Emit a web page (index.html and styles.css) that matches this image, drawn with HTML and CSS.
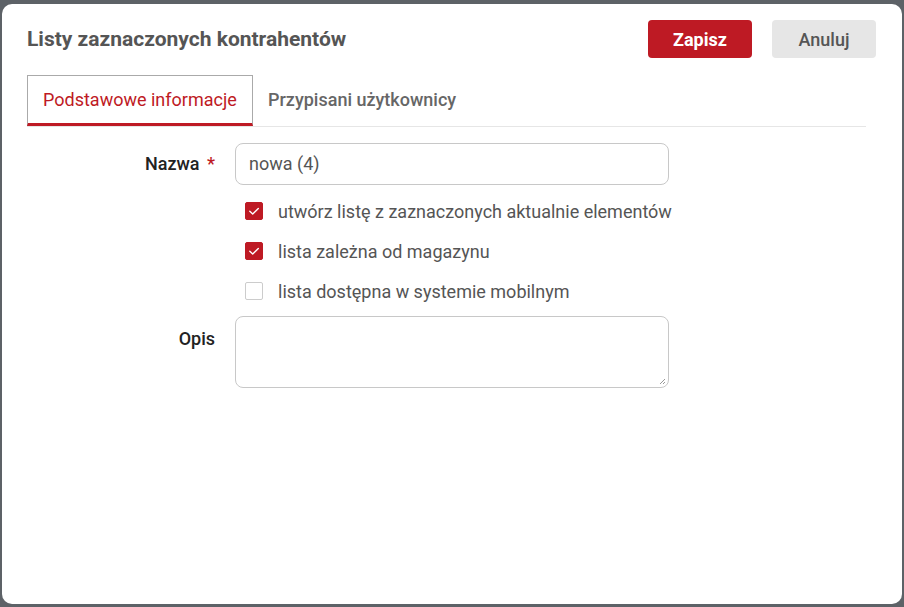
FILE: index.html
```html
<!DOCTYPE html>
<html lang="pl">
<head>
<meta charset="utf-8">
<title>Listy zaznaczonych kontrahentów</title>
<link rel="stylesheet" href="styles.css">
</head>
<body>
<div class="dialog">
  <div class="header">
    <h1 class="title">Listy zaznaczonych kontrahentów</h1>
    <div class="actions">
      <button class="btn btn-primary">Zapisz</button>
      <button class="btn btn-secondary">Anuluj</button>
    </div>
  </div>
  <div class="tabs">
    <div class="tab tab-active">Podstawowe informacje</div>
    <div class="tab">Przypisani użytkownicy</div>
  </div>
  <div class="form">
    <label class="label label-name">Nazwa <span class="req">*</span></label>
    <div class="input">nowa (4)</div>
    <div class="checks">
      <div class="check-row"><span class="box box-on"><svg viewBox="0 0 18 18" width="18" height="18"><path d="M4.8 9.2l2.9 2.8 5.6-5.6" fill="none" stroke="#fff" stroke-width="1.4" stroke-linecap="round" stroke-linejoin="round"/></svg></span><span class="check-label">utwórz listę z zaznaczonych aktualnie elementów</span></div>
      <div class="check-row"><span class="box box-on"><svg viewBox="0 0 18 18" width="18" height="18"><path d="M4.8 9.2l2.9 2.8 5.6-5.6" fill="none" stroke="#fff" stroke-width="1.4" stroke-linecap="round" stroke-linejoin="round"/></svg></span><span class="check-label">lista zależna od magazynu</span></div>
      <div class="check-row"><span class="box"></span><span class="check-label">lista dostępna w systemie mobilnym</span></div>
    </div>
    <label class="label label-desc">Opis</label>
    <div class="textarea"><svg class="grip" viewBox="0 0 8 8" width="8" height="8"><path d="M7 2L2 7M7 5L5 7" stroke="#999" stroke-width="1"/></svg></div>
  </div>
</div>
</body>
</html>
```

FILE: styles.css
```css
* { box-sizing: border-box; }
html, body { margin: 0; padding: 0; }
body {
  background: #5d6267;
  font-family: Roboto, "Liberation Sans", sans-serif;
  width: 904px;
  height: 607px;
  overflow: hidden;
  padding: 4px 2px 3px 2px;
}
.dialog {
  background: #fff;
  border-radius: 10px;
  height: 600px;
  padding: 16px 26px 0 25px;
}
.header {
  display: flex;
  align-items: center;
  justify-content: space-between;
  height: 38px;
}
.title {
  margin: 0;
  font-size: 21px;
  font-weight: 700;
  color: #555;
}
.actions { display: flex; gap: 20px; }
.btn {
  width: 104px;
  height: 38px;
  border: none;
  border-radius: 4px;
  font-family: inherit;
  font-size: 18px;
  font-weight: 700;
  padding: 0;
}
.btn-primary { background: #be1a24; color: #fff; }
.btn-secondary { background: #e6e6e6; color: #555; font-weight: 500; }
.tabs {
  display: flex;
  margin-top: 17px;
  margin-right: 10px;
  border-bottom: 1px solid #e6e6e6;
}
.tab {
  height: 51px;
  padding: 0 15px 3px;
  display: flex;
  align-items: center;
  font-size: 18px;
  font-weight: 500;
  color: #666;
}
.tab-active {
  border: 1px solid #aaa;
  border-bottom: 3px solid #be1a24;
  color: #be1a24;
  font-weight: 400;
  width: 226px;
  padding-bottom: 0;
}
.form {
  display: grid;
  grid-template-columns: 188px 434px;
  column-gap: 20px;
  margin-top: 16px;
}
.label {
  text-align: right;
  font-size: 18px;
  font-weight: 500;
  color: #222;
}
.label-name { line-height: 42px; }
.req { color: #be1a24; margin-left: 3px; }
.input {
  height: 42px;
  border: 1px solid #c8c8c8;
  border-radius: 8px;
  padding: 0 13px;
  line-height: 40px;
  font-size: 18px;
  color: #555;
}
.checks {
  grid-column: 2;
  padding: 6px 0 0 10px;
}
.check-row {
  display: flex;
  align-items: center;
  gap: 15px;
  height: 40px;
}
.box {
  width: 18px;
  height: 18px;
  border: 1px solid #ccc;
  border-radius: 2px;
  display: block;
  flex: none;
}
.box svg { display: block; margin: -1px; }
.box-on { background: #be1a24; border-color: #be1a24; }
.check-label {
  font-size: 18px;
  color: #555;
  white-space: nowrap;
}
.label-desc { grid-column: 1; margin-top: 5px; padding-top: 12px; }
.textarea {
  grid-column: 2;
  margin-top: 5px;
  height: 72px;
  border: 1px solid #c8c8c8;
  border-radius: 8px;
  position: relative;
}
.grip { position: absolute; right: 2px; bottom: 2px; }
```
